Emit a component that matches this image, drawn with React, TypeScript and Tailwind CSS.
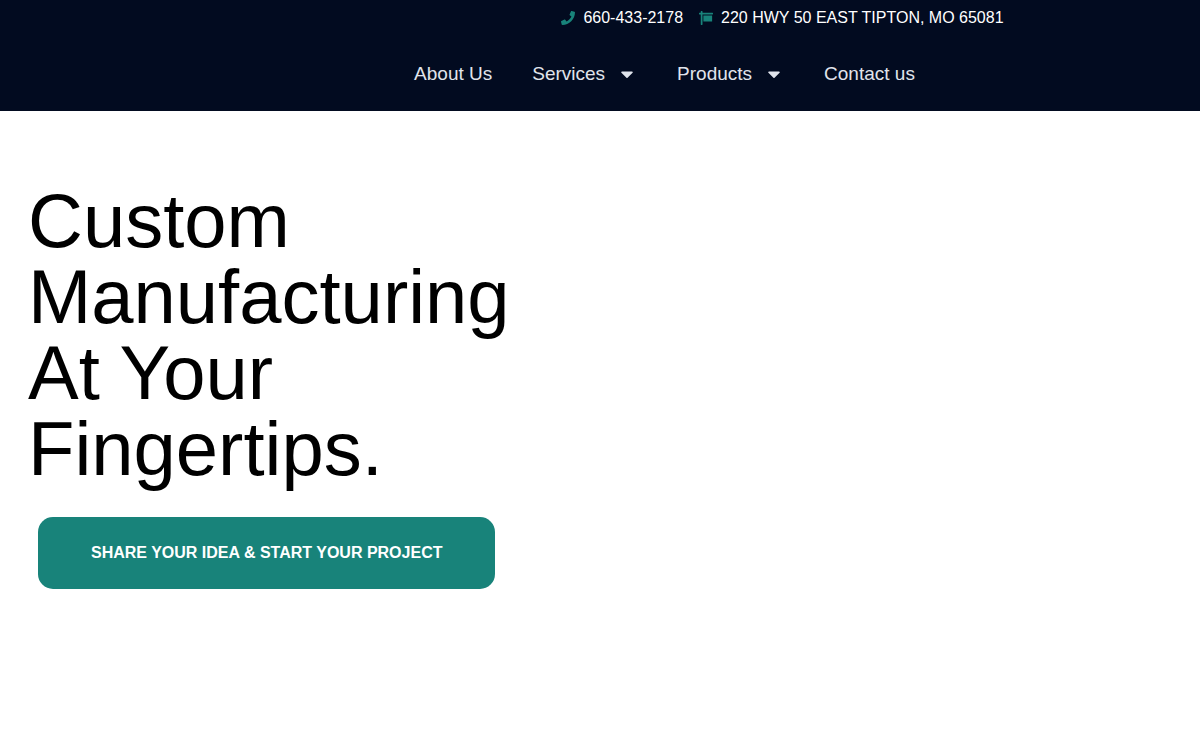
import React from 'react';
import { FaPhone, FaSign, FaCaretDown } from 'react-icons/fa';

const navItems = [
  { label: 'About Us', href: '#about', hasMenu: false },
  { label: 'Services', href: '#services', hasMenu: true },
  { label: 'Products', href: '#products', hasMenu: true },
  { label: 'Contact us', href: '#contact', hasMenu: false },
];

const TopBar: React.FC = () => (
  <address className="flex justify-center gap-4 pl-[365px] text-base leading-9 text-white not-italic">
    <a href="tel:660-433-2178" className="flex items-center gap-2">
      <FaPhone className="size-3.5 text-[#18837a]" aria-hidden="true" />
      <span>660-433-2178</span>
    </a>
    <div className="flex items-center gap-2">
      <FaSign className="size-3.5 text-[#18837a]" aria-hidden="true" />
      <span>220 HWY 50 EAST TIPTON, MO 65081</span>
    </div>
  </address>
);

const NavBar: React.FC = () => (
  <nav className="flex justify-center pl-[129px]">
    <ul className="flex gap-10 text-[19px] leading-[75px] text-[#e0e4ec]">
      {navItems.map((item) => (
        <li key={item.label}>
          <a href={item.href} className="flex items-center">
            {item.label}
            {item.hasMenu && <FaCaretDown className="ml-3 size-5" aria-hidden="true" />}
          </a>
        </li>
      ))}
    </ul>
  </nav>
);

const Hero: React.FC = () => (
  <main className="px-7 pt-[72px]">
    <h1 className="max-w-[500px] text-[76px] leading-[76px] text-black">
      Custom Manufacturing At Your Fingertips.
    </h1>
    <a
      href="#project"
      className="mt-[30px] ml-2.5 inline-block rounded-[15px] bg-[#18837a] px-[53px] py-6 text-base font-bold text-white"
    >
      SHARE YOUR IDEA &amp; START YOUR PROJECT
    </a>
  </main>
);

export default function App() {
  return (
    <div className="min-h-screen bg-white font-['Liberation_Sans',Arial,sans-serif]">
      <header className="bg-[#020b20]">
        <TopBar />
        <NavBar />
      </header>
      <Hero />
    </div>
  );
}
